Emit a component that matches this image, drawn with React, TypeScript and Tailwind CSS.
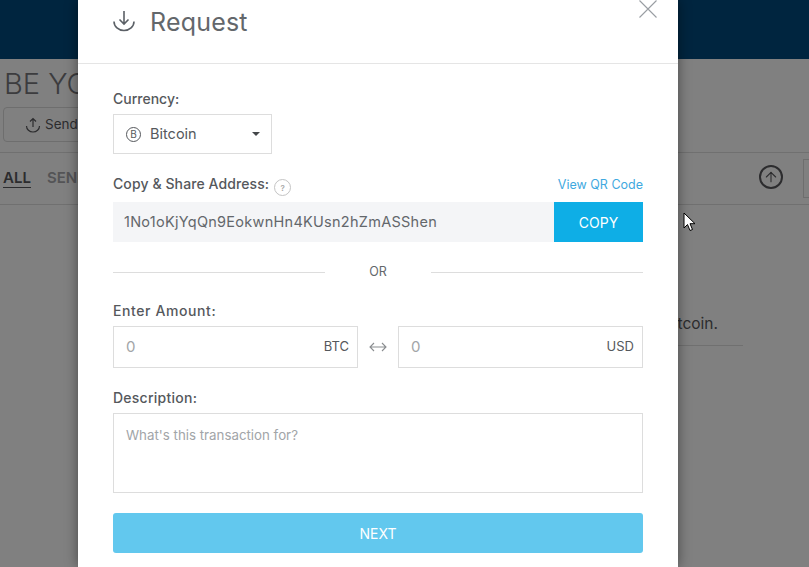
import { ArrowUp } from 'lucide-react';

const font = { fontFamily: 'Inter, "Noto Sans", sans-serif' };

function Background() {
  return (
    <div className="h-[567px] overflow-hidden bg-[#808080] text-[#2c2c2e]">
      <div className="h-[59px] bg-[#00253f]" />
      <div className="h-[94px] border-b border-[#707070] pl-1 pt-[8px]">
        <div className="text-[29px] leading-[34px] font-light text-[#3c3c3e]">BE YO</div>
        <div className="mt-[6px] ml-[-1px] flex h-[35px] w-[120px] items-center gap-1 rounded border border-[#6e6e6e] pl-[21px] text-[13.500px]">
          <SendIcon />
          Send
        </div>
      </div>
      <div className="relative flex h-[52px] items-center gap-4 border-b border-[#707070] pl-[3px] text-[15px] font-semibold">
        <span className="border-b border-[#2c2c2e] leading-[18px]">ALL</span>
        <span className="text-[#545456]">SEND</span>
        <div className="absolute left-[759px] top-[12px] flex h-[24px] w-[24px] items-center justify-center rounded-full border-2 border-[#2c2c2e]">
          <ArrowUp size={16} strokeWidth={1.6} />
        </div>
        <div className="absolute left-[803px] top-[6px] h-[39px] w-[20px] border border-[#6e6e6e]" />
      </div>
      <div className="ml-auto mr-[66px] mt-[108px] h-[33px] w-[400px] border-b border-[#707070] pr-[25px] pt-[1px] text-right text-[15.500px] leading-[20px]">
        Bitcoin.
      </div>
    </div>
  );
}

function SendIcon() {
  return (
    <svg width="16" height="16" viewBox="0 0 16 16" fill="none" stroke="currentColor" strokeWidth="1.2">
      <path d="M8 10V1.500M5 4.500l3-3 3 3" />
      <path d="M1.500 9a6.500 6 0 0 0 13 0" />
    </svg>
  );
}

function RequestIcon() {
  return (
    <svg className="mt-[2px]" width="24" height="22" viewBox="0 0 24 22" fill="none" stroke="#5b6066" strokeWidth="1.6">
      <path d="M12 1v13M7.500 9.500L12 14l4.500-4.500" />
      <path d="M2 11.500a10 9 0 0 0 20 0" />
    </svg>
  );
}

function AmountField({ unit }: { unit: string }) {
  return (
    <div className="flex h-[42px] flex-1 items-center justify-between border border-[#dddddd] pl-[12px] pr-2">
      <span className="text-[15px] text-[#a2a5a8]">0</span>
      <span className="text-[13px] text-[#55585c]">{unit}</span>
    </div>
  );
}

function Modal() {
  return (
    <div className="absolute left-[78px] top-0 h-[567px] w-[600px] overflow-hidden bg-white shadow-[0_0_12px_rgba(0,0,0,0.45)]">
      <div className="relative flex h-[64px] items-start gap-[14px] border-b border-[#e5e5e5] pl-[34px] pt-[8px]">
        <RequestIcon />
        <h2 className="text-[25px] leading-[28px] font-normal tracking-[0.2px] text-[#63676b]">Request</h2>
        <svg className="absolute right-[20px] top-0" width="20" height="19" viewBox="0 0 20 19" fill="none" stroke="#9a9ea3" strokeWidth="1.1">
          <path d="M1.500 0.500L18.500 17.500M18.500 0.500L1.500 17.500" />
        </svg>
      </div>

      <div className="px-[35px] pt-[26px]">
        <label className="block text-[14px] leading-[17px] font-medium text-[#55585c]">Currency:</label>
        <div className="mt-[7px] flex h-[40px] w-[159px] items-center border border-[#dddddd] pl-[12px] pr-[11px] text-[14.500px] text-[#55585c]">
          <span className="flex h-[15px] w-[15px] items-center justify-center rounded-full border border-[#55585c] text-[10px]">B</span>
          <span className="ml-[9px]">Bitcoin</span>
          <span className="ml-auto h-0 w-0 border-x-[4px] border-t-[4px] border-x-transparent border-t-[#44474a]" />
        </div>

        <div className="mt-[21px] flex h-[20px] items-center">
          <label className="pb-[3px] text-[14px] font-medium tracking-[0.1px] text-[#55585c]">Copy &amp; Share Address:</label>
          <span className="ml-[5px] mt-[5px] flex h-[17px] w-[17px] items-center justify-center rounded-full border border-[#c4c4c4] text-[8px] font-semibold text-[#a9a9a9]">?</span>
          <a className="ml-auto text-[12.500px] text-[#3fa9e0]">View QR Code</a>
        </div>
        <div className="mt-[7px] flex h-[40px]">
          <div className="flex flex-1 items-center bg-[#f4f5f7] pl-[11px] text-[14.500px] tracking-[0.27px] text-[#63676b]">1No1oKjYqQn9EokwnHn4KUsn2hZmASShen</div>
          <button className="w-[89px] bg-[#0eaee6] text-[14px] text-white">COPY</button>
        </div>

        <div className="mt-[20px] flex items-center">
          <div className="h-px w-[212px] bg-[#dddddd]" />
          <span className="flex-1 text-center text-[12.500px] leading-[20px] text-[#63676b]">OR</span>
          <div className="h-px w-[212px] bg-[#dddddd]" />
        </div>

        <label className="mt-[20px] block text-[14px] leading-[17px] font-medium tracking-[0.6px] text-[#55585c]">Enter Amount:</label>
        <div className="mt-[7px] flex items-center">
          <AmountField unit="BTC" />
          <svg className="mx-[11px] shrink-0" width="18" height="10" viewBox="0 0 18 10" fill="none" stroke="#8a8d90" strokeWidth="1.1">
            <path d="M1 5h16M5 1L1 5l4 4M13 1l4 4-4 4" />
          </svg>
          <AmountField unit="USD" />
        </div>

        <label className="mt-[21px] block text-[14px] leading-[17px] font-medium tracking-[0.25px] text-[#55585c]">Description:</label>
        <div className="mt-[7px] h-[80px] border border-[#dddddd] px-3 py-[13px] text-[13.300px] leading-[16px] text-[#a2a5a8]">What's this transaction for?</div>

        <button className="mt-[20px] h-[40px] w-full rounded-[3px] bg-[#62c8ee] text-[14px] text-white">NEXT</button>
      </div>
    </div>
  );
}

export default function App() {
  return (
    <div className="relative h-[567px] w-[809px] overflow-hidden" style={font}>
      <Background />
      <Modal />
      <svg className="absolute left-[683px] top-[212px]" width="13" height="20" viewBox="0 0 13 20">
        <path d="M1 1v15l3.500-3.500 2.500 6 2.500-1-2.500-5.800h5z" fill="white" stroke="black" strokeWidth="1" />
      </svg>
    </div>
  );
}
